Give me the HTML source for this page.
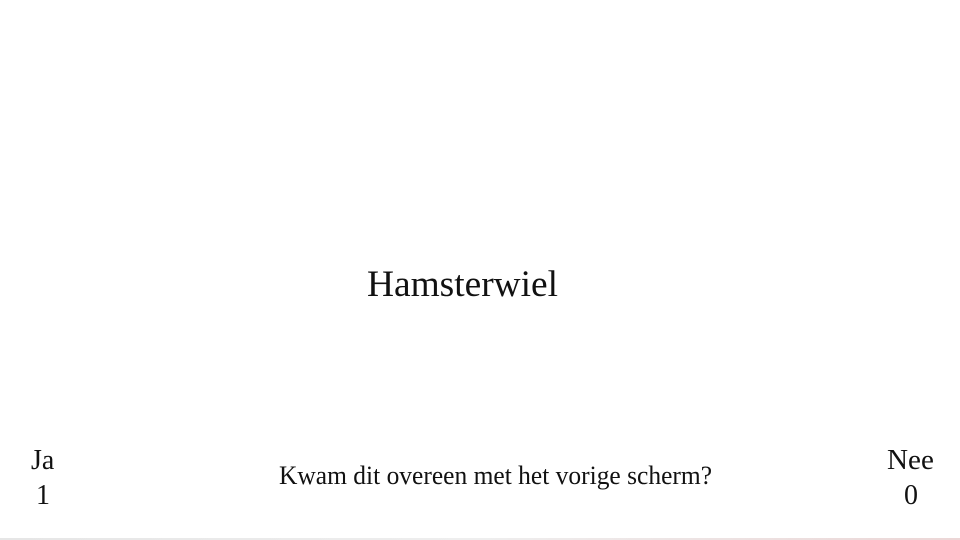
<!DOCTYPE html>
<html><head><style>
body{margin:0;width:960px;height:540px;background:#fff;position:relative;overflow:hidden;font-family:"Liberation Serif",serif;color:#111}
div{position:absolute;white-space:nowrap;line-height:1}
.b{position:absolute;left:0;right:0;bottom:0;height:2px;background:linear-gradient(90deg,#e6e6e6,#eee 50%,#ecd6d6)}
</style></head><body>
<div style="left:367px;top:266px;font-size:37.4px">Hamsterwiel</div>
<div style="left:279px;top:463px;font-size:26px;transform:scaleX(0.98);transform-origin:left">Kwam dit overeen met het vorige scherm?</div>
<div style="left:31px;top:447px;font-size:28px">Ja</div>
<div style="left:36px;top:482px;font-size:28px">1</div>
<div style="left:887px;top:447px;font-size:28px;transform:scaleX(1.04);transform-origin:left">Nee</div>
<div style="left:904px;top:482px;font-size:28px">0</div>
<span class="b"></span>
</body></html>
